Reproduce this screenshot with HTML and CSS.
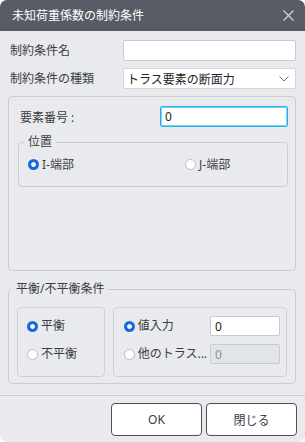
FILE: index.html
```html
<!DOCTYPE html>
<html lang="ja">
<head>
    <meta charset="UTF-8">
    <meta name="viewport" content="width=device-width, initial-scale=1.0">
    <title>未知荷重係数の制約条件</title>
    <link rel="stylesheet" href="styles.css">
</head>
<body>
    <div class="dialog">
        <div class="titlebar">
            <span class="title">未知荷重係数の制約条件</span>
            <svg class="close-icon" width="11" height="11" viewBox="0 0 11 11">
                <path d="M0.5 0.5 L10.5 10.5 M10.5 0.5 L0.5 10.5" stroke="#d6d9dd" stroke-width="1.1" fill="none"/>
            </svg>
        </div>

        <div class="content">
            <div class="field-row">
                <label class="field-label">制約条件名</label>
                <input type="text" class="text-input wide">
            </div>
            <div class="field-row">
                <label class="field-label">制約条件の種類</label>
                <div class="select">
                    <span>トラス要素の断面力</span>
                    <svg class="chevron" width="10" height="6" viewBox="0 0 10 6">
                        <path d="M0.5 0.5 L5 5 L9.5 0.5" stroke="#6b7078" stroke-width="1" fill="none"/>
                    </svg>
                </div>
            </div>

            <fieldset class="group group-main">
                <div class="element-row">
                    <label class="element-label">要素番号 :</label>
                    <input type="text" class="text-input focused" value="0">
                </div>
                <fieldset class="group group-pos">
                    <legend>位置</legend>
                    <div class="pos-options">
                        <label class="radio"><input type="radio" name="pos" checked>I-端部</label>
                        <label class="radio"><input type="radio" name="pos">J-端部</label>
                    </div>
                </fieldset>
            </fieldset>

            <fieldset class="group group-balance">
                <legend>平衡/不平衡条件</legend>
                <div class="balance-cols">
                    <div class="sub-box sub-left">
                        <label class="radio"><input type="radio" name="bal" checked>平衡</label>
                        <label class="radio"><input type="radio" name="bal">不平衡</label>
                    </div>
                    <div class="sub-box sub-right">
                        <div class="value-row">
                            <label class="radio"><input type="radio" name="src" checked>値入力</label>
                            <input type="text" class="text-input small" value="0">
                        </div>
                        <div class="value-row">
                            <label class="radio"><input type="radio" name="src">他のトラス...</label>
                            <input type="text" class="text-input small" value="0" disabled>
                        </div>
                    </div>
                </div>
            </fieldset>
        </div>

        <div class="footer">
            <button class="btn">OK</button>
            <button class="btn">閉じる</button>
        </div>
    </div>
</body>
</html>
```

FILE: styles.css
```css
* {
    margin: 0;
    padding: 0;
    box-sizing: border-box;
}

body {
    background: #fff;
    font-family: "Noto Sans", "Noto Sans CJK JP", sans-serif;
    font-size: 12px;
    color: #3a3d42;
}

.dialog {
    width: 305px;
    height: 442px;
    background: #e9eaed;
    border-radius: 7px;
    overflow: hidden;
    display: flex;
    flex-direction: column;
}

.titlebar {
    height: 31px;
    flex-shrink: 0;
    background: #575c64;
    color: #fff;
    display: flex;
    align-items: center;
    justify-content: space-between;
    padding: 0 11px 0 12px;
}

.title {
    font-size: 12px;
    line-height: 16px;
}

.content {
    flex: 1;
    padding: 9px 9px 0 8px;
}

.field-row {
    display: flex;
    align-items: center;
    height: 21px;
    margin-bottom: 7px;
}

.field-label {
    width: 115px;
    padding-left: 2px;
    line-height: 16px;
}

.text-input {
    height: 21px;
    border: 1px solid #c5cbd4;
    border-radius: 2px;
    background: #fff;
    font-family: inherit;
    font-size: 12px;
    color: #222;
    padding: 0 4px;
    outline: none;
}

.text-input.wide {
    width: 173px;
}

.text-input.focused {
    width: 128px;
    border-color: #1db3ef;
    box-shadow: inset 0 0 0 1px #7fd3f5;
}

.text-input.small {
    width: 70px;
    height: 20px;
}

.text-input:disabled {
    background: #e2e4e8;
    color: #8c9097;
}

.select {
    width: 173px;
    height: 21px;
    background: #fff;
    border: 1px solid #d3d7dd;
    border-radius: 2px;
    display: flex;
    align-items: center;
    justify-content: space-between;
    padding: 0 6px 0 3px;
    color: #1f2125;
}

.group {
    border: 1px solid #c9cdd3;
    border-radius: 4px;
    min-width: 0;
}

.group legend {
    line-height: 16px;
    padding: 0 4px;
}

.group-main {
    height: 175px;
    padding: 9px 7px 0 9px;
}

.element-row {
    display: flex;
    align-items: center;
    justify-content: space-between;
    height: 21px;
    margin-bottom: 7px;
}

.element-label {
    padding-left: 2px;
}

.group-pos {
    padding: 4px 0 11px 9px;
}

.group-pos legend {
    margin-left: -4px;
}

.pos-options {
    display: grid;
    grid-template-columns: 157px auto;
    height: 21px;
    align-items: center;
}

.radio {
    display: flex;
    align-items: center;
    gap: 3px;
    white-space: nowrap;
    line-height: 16px;
}

.radio input {
    appearance: none;
    width: 11px;
    height: 11px;
    border-radius: 50%;
    border: 1px solid #b8bdc5;
    background: #fff;
    flex-shrink: 0;
    margin: 0;
}

.radio input:checked {
    border: none;
    background: radial-gradient(circle, #fff 0 2px, #1769e3 2.6px);
}

.group-balance {
    margin-top: 10px;
    padding: 10px 8px 6px 8px;
}

.group-balance legend {
    margin-left: -5px;
}

.balance-cols {
    display: flex;
    gap: 8px;
}

.sub-box {
    height: 70px;
    border: 1px solid #cdd1d6;
    border-radius: 4px;
    padding-top: 8px;
    display: flex;
    flex-direction: column;
    gap: 8px;
}

.sub-left {
    width: 88px;
    padding-left: 9px;
}

.sub-left .radio {
    height: 20px;
}

.sub-right {
    width: 175px;
    padding-left: 10px;
    padding-right: 6px;
}

.value-row {
    display: flex;
    align-items: center;
    justify-content: space-between;
    height: 20px;
}

.footer {
    flex-shrink: 0;
    margin-top: 11px;
    border-top: 1px solid #c9ccd1;
    padding: 7px 8px 7px 0;
    display: flex;
    justify-content: flex-end;
    gap: 4px;
}

.btn {
    width: 91px;
    height: 33px;
    background: #fff;
    border: 1px solid #4c5159;
    border-radius: 4px;
    font-family: inherit;
    font-size: 12px;
    color: #3a3d42;
}
```
